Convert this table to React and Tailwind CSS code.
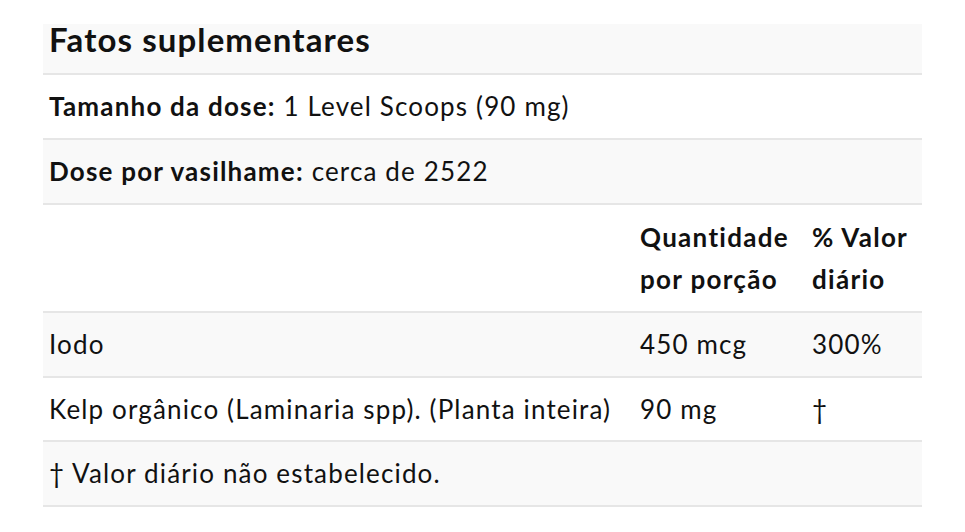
import React from 'react';

const rowBase = 'grid grid-cols-[591px_172px_116px] border-b-2 border-[#e6e6e6]';

const App = () => {
  return (
    <div className="min-h-screen bg-white pt-[24px] pl-[43px] font-['Lato','Liberation_Sans',sans-serif] text-[26px] tracking-[1.15px] text-[#111]">
      <div className="w-[879px]">
        {/* Title */}
        <div className="h-[51px] bg-[#f9f9f9] border-b-2 border-[#e6e6e6] px-[6px]">
          <h2 className="text-[33px] font-bold leading-[30px] tracking-[1.1px]">Fatos suplementares</h2>
        </div>

        {/* Serving info */}
        <div className="h-[65px] flex items-center px-[6px] border-b-2 border-[#e6e6e6] whitespace-pre">
          <span className="font-bold tracking-[1.2px]">Tamanho da dose:</span> 1 Level Scoops (90 mg)
        </div>
        <div className="h-[65px] flex items-center px-[6px] bg-[#f9f9f9] border-b-2 border-[#e6e6e6] whitespace-pre">
          <span className="font-bold tracking-[1.2px]">Dose por vasilhame:</span> cerca de 2522
        </div>

        {/* Column headers */}
        <div className={`${rowBase} h-[108px] items-center font-bold tracking-[1.3px] leading-[42px]`}>
          <div />
          <div className="px-[6px] whitespace-nowrap">Quantidade<br />por porção</div>
          <div className="px-[6px] whitespace-nowrap">% Valor<br />diário</div>
        </div>

        {/* Ingredients */}
        <div className={`${rowBase} h-[65px] items-center bg-[#f9f9f9]`}>
          <div className="px-[6px]">Iodo</div>
          <div className="px-[6px]">450 mcg</div>
          <div className="px-[6px]">300%</div>
        </div>
        <div className={`${rowBase} h-[64px] items-center`}>
          <div className="px-[6px] whitespace-nowrap">Kelp orgânico (Laminaria spp). (Planta inteira)</div>
          <div className="px-[6px]">90 mg</div>
          <div className="px-[6px]">†</div>
        </div>

        {/* Footnote */}
        <div className="h-[65px] flex items-center px-[6px] bg-[#f9f9f9] border-b-2 border-[#e6e6e6]">
          † Valor diário não estabelecido.
        </div>
      </div>
    </div>
  );
};

export default App;
